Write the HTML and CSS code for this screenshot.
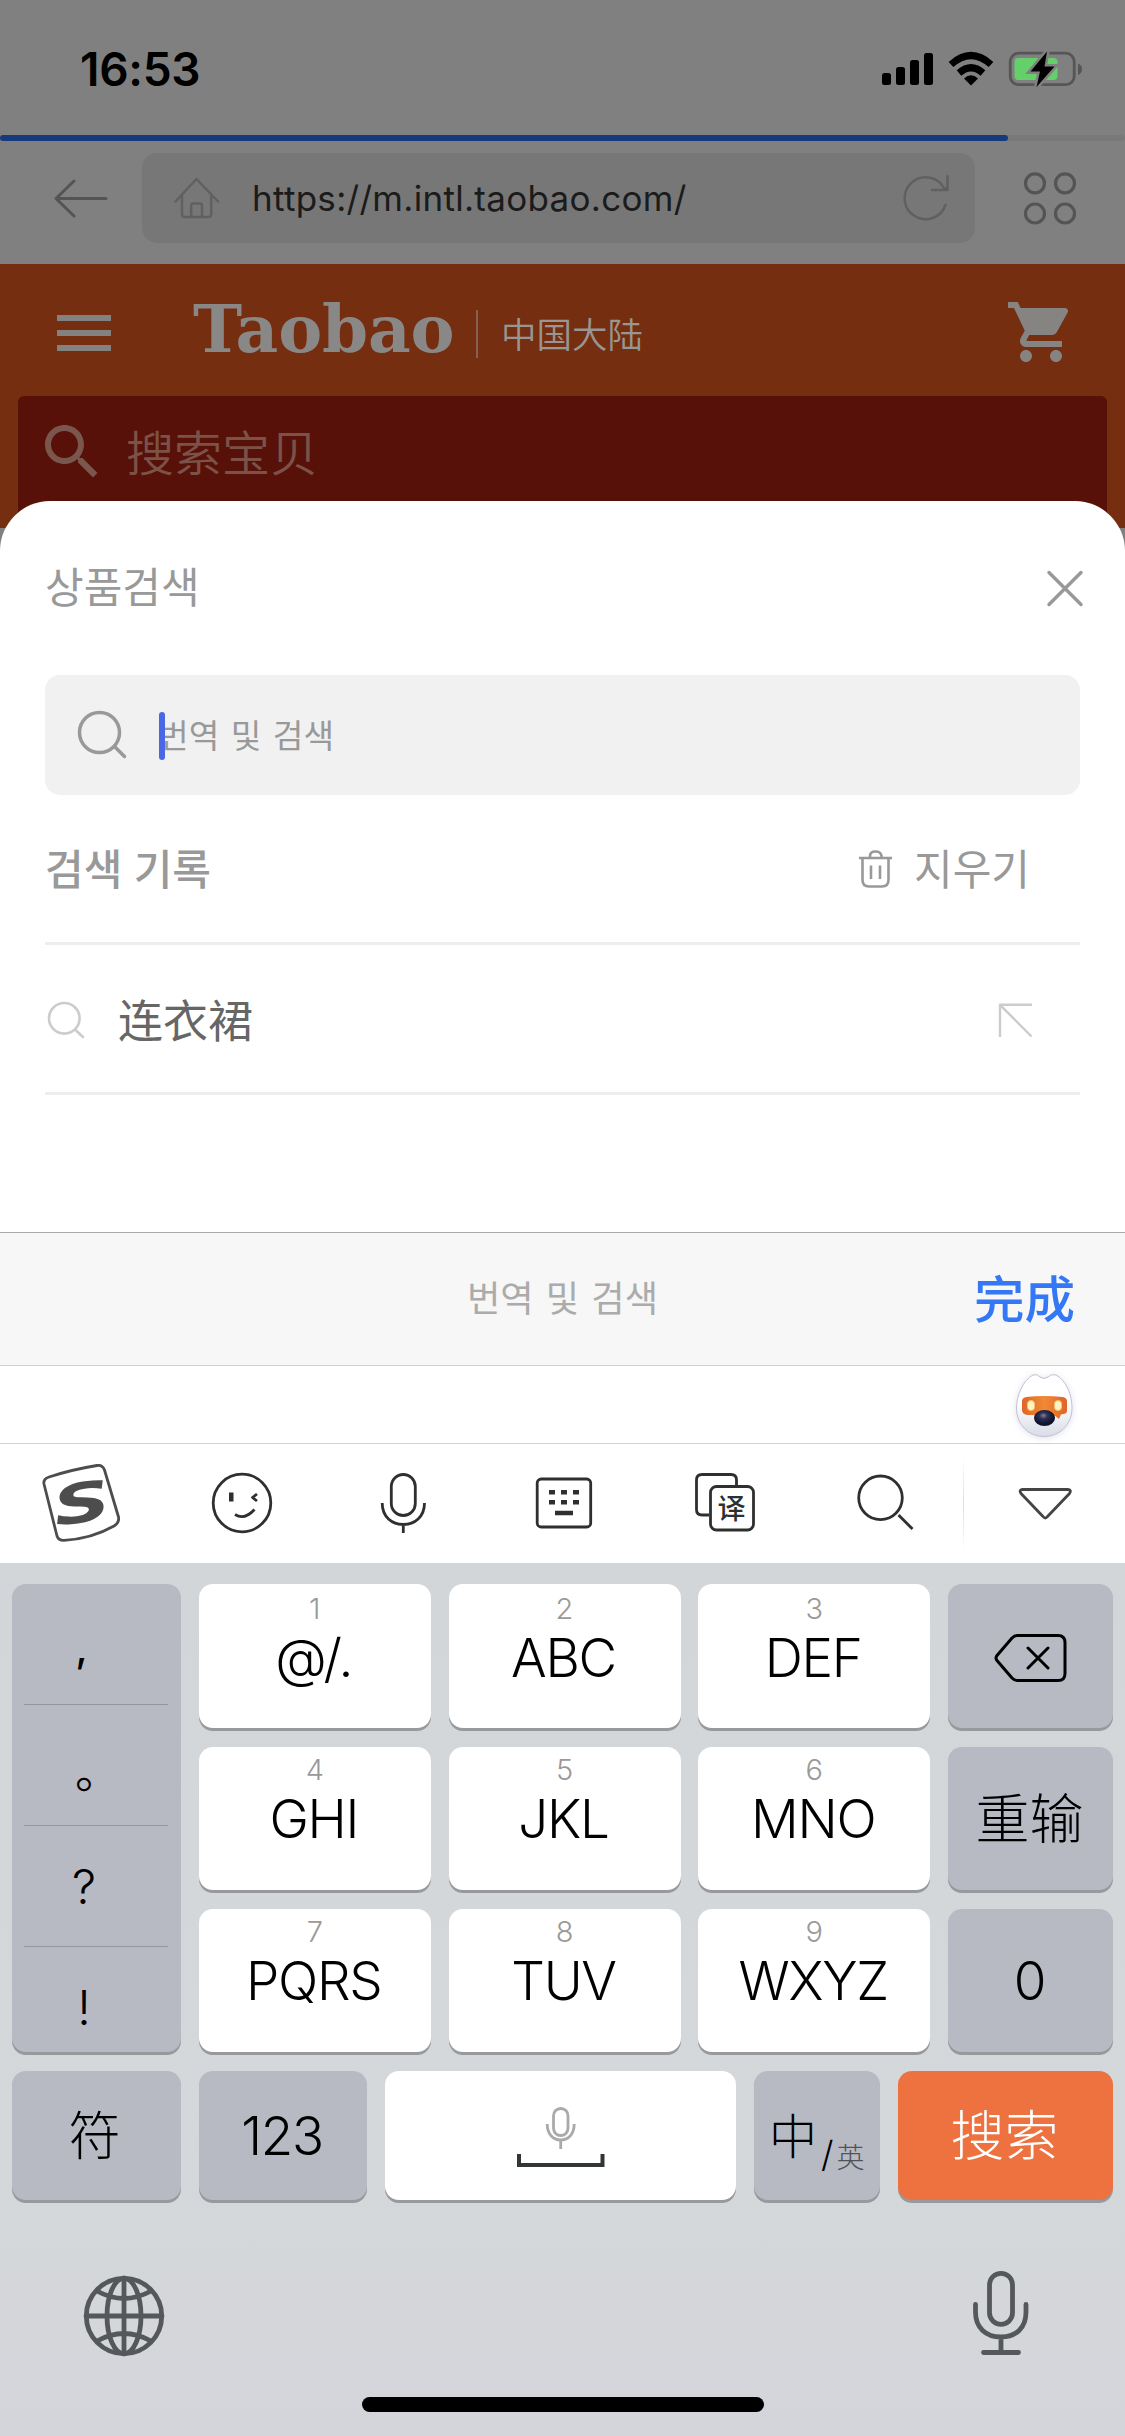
FILE: index.html
```html
<!DOCTYPE html>
<html lang="zh-CN">
<head>
<meta charset="utf-8">
<title>상품검색</title>
<link rel="stylesheet" href="styles.css">
</head>
<body>
<div class="screen">
  <div class="browser">
    <div class="status">
      <span class="time">16:53</span>
      <svg class="status-icons" viewBox="882 46 204 46" width="204" height="46">
        <rect x="882" y="73" width="9" height="12" rx="2.5"/><rect x="896" y="67" width="9" height="18" rx="2.5"/><rect x="910" y="60" width="9" height="25" rx="2.5"/><rect x="924" y="53" width="9" height="32" rx="2.5"/>
        <path d="M951 64.500Q971 46.500 991 64.500M959 73Q971 62.500 983 73" fill="none" stroke="#000" stroke-width="7"/>
        <path d="M964 78.500Q971 72 978 78.500L971 85.500Z"/>
        <rect x="1010.200" y="53.200" width="64" height="31.500" rx="8.500" fill="none" stroke="#565656" stroke-width="2.800"/>
        <path d="M1078 63.500Q1082 65 1082 69.200T1078 75Z" fill="#565656"/>
        <rect x="1014.500" y="58" width="43" height="22" rx="4" fill="#65cf6a"/>
        <path d="M1047 51.500L1030.500 71.500H1040L1036.500 87L1054.500 66.500H1044.500Z" stroke="#808080" stroke-width="5"/>
        <path d="M1047 51.500L1030.500 71.500H1040L1036.500 87L1054.500 66.500H1044.500Z"/>
      </svg>
    </div>
    <div class="progress"><div class="progress-done"></div></div>
    <div class="toolbar">
      <svg class="back" viewBox="52 176 58 44" width="58" height="44"><path d="M74 181L56 198.500L74 216M56 198.500H106"/></svg>
      <div class="address">
        <svg class="home" viewBox="172 174 50 50" width="50" height="50"><path d="M175.500 202.500L196.500 180L218 202.500M182 197V215.500Q182 218 184.500 218H208.500Q211.200 218 211.200 215.500V197M191.200 218V206.500Q191.200 204.500 193.200 204.500H200Q202 204.500 202 206.500V218"/></svg>
        <span class="url">https://m.intl.taobao.com/</span>
        <svg class="reload" viewBox="900 174 50 50" width="50" height="50"><path d="M945.500 206A21 21 0 1 1 944 189L947 190.500M947.500 177V191H932"/></svg>
      </div>
      <svg class="apps" viewBox="1022 170 56 56" width="56" height="56"><circle cx="1035" cy="183.300" r="9.500"/><circle cx="1065" cy="183.300" r="9.500"/><circle cx="1035" cy="213.500" r="9.500"/><circle cx="1065" cy="213.500" r="9.500"/></svg>
    </div>
    <div class="shop">
      <div class="shop-head">
        <div class="burger"><i></i><i></i><i></i></div>
        <span class="brand">Taobao</span>
        <span class="region">中国大陆</span>
        <svg class="cart" viewBox="0 0 24 24" width="72" height="72"><path d="M7 18c-1.100 0-1.990.9-1.990 2S5.900 22 7 22s2-.9 2-2-.9-2-2-2zM1 2v2h2l3.600 7.590-1.350 2.450c-.16.28-.25.61-.25.96 0 1.100.9 2 2 2h12v-2H7.420c-.14 0-.25-.11-.25-.25l.03-.12.9-1.630h7.450c.75 0 1.410-.41 1.750-1.030l3.580-6.490c.08-.14.12-.31.12-.48 0-.55-.45-1-1-1H5.210l-.94-2H1zm16 16c-1.100 0-1.990.9-1.990 2s.89 2 1.990 2 2-.9 2-2-.9-2-2-2z"/></svg>
      </div>
      <div class="shop-search">
        <svg viewBox="0 0 24 24" width="72" height="72"><path d="M15.500 14h-.79l-.28-.27C15.410 12.590 16 11.110 16 9.500 16 5.910 13.090 3 9.500 3S3 5.910 3 9.500 5.910 16 9.500 16c1.610 0 3.090-.59 4.230-1.570l.27.28v.79l5 4.990L20.490 19l-4.990-5zm-6 0C7.010 14 5 11.990 5 9.500S7.010 5 9.500 5 14 7.010 14 9.500 11.990 14 9.500 14z"/></svg>
        <span>搜索宝贝</span>
      </div>
    </div>
  </div>

  <div class="sheet">
    <div class="sheet-head">
      <span class="ko title">상품검색</span>
      <svg viewBox="1045 568 40 40" width="40" height="40"><path d="M1049 572.500L1081 604.500M1081 572.500L1049 604.500"/></svg>
    </div>
    <div class="field">
      <svg viewBox="76 710 54 54" width="54" height="54"><circle cx="99.500" cy="733.500" r="20"/><path d="M115 748L124.500 757.500"/></svg>
      <div class="field-text"><i class="caret"></i><span class="ko">번역 및 검색</span></div>
    </div>
    <div class="row">
      <span class="ko heading">검색 기록</span>
      <svg class="trash" viewBox="857 848 38 44" width="38" height="44"><path d="M859 859H892M862.500 859V881Q862.500 887.500 869 887.500H882Q888.500 887.500 888.500 881V859M870 859V857Q870 852.500 875.500 852.500T881.500 857V859M871 866.500V880M880 866.500V880"/></svg>
      <span class="ko clear">지우기</span>
    </div>
    <div class="row">
      <svg class="mini" viewBox="46 1000 42 42" width="42" height="42"><circle cx="64.300" cy="1019.300" r="15.300"/><path d="M76 1031.500L83 1038"/></svg>
      <span class="term">连衣裙</span>
      <svg class="fill" viewBox="997 1002 38 38" width="38" height="38"><path d="M1032 1005.800H1000V1038M1000 1005.800L1031.500 1037.500"/></svg>
    </div>
  </div>

  <div class="accessory"><span></span><span class="ko hint">번역 및 검색</span><span class="done">完成</span></div>
  <div class="mascot-strip">
    <svg viewBox="1010 1368 68 74" width="68" height="74">
      <defs>
        <linearGradient id="body" x1="0" y1="0" x2="0" y2="1"><stop offset=".45" stop-color="#fff"/><stop offset="1" stop-color="#d9dce6"/></linearGradient>
        <linearGradient id="visor" x1="0" x2="1" y1="0" y2="0"><stop offset="0" stop-color="#e0642a"/><stop offset=".5" stop-color="#f08a35"/><stop offset="1" stop-color="#e0642a"/></linearGradient>
        <radialGradient id="nose" cx=".45" cy=".35"><stop offset="0" stop-color="#80809c"/><stop offset=".4" stop-color="#2c3152"/><stop offset="1" stop-color="#10142b"/></radialGradient>
      </defs>
      <path d="M1033 1375Q1037 1373.500 1040 1377Q1044 1380 1048 1377Q1051 1373.500 1056 1375C1067 1381 1072 1396 1072 1408C1072 1425 1059 1436.500 1044 1436.500S1016.500 1425 1016.500 1408C1016.500 1396 1023 1380 1033 1375Z" fill="url(#body)" stroke="#c3c0d0"/>
      <path d="M1026 1397Q1044 1395 1063 1397Q1067 1398 1067 1401V1411Q1067 1414 1061 1414.500L1059 1419L1054 1415H1027Q1022 1414 1022 1410V1401Q1022 1398 1026 1397Z" fill="url(#visor)"/>
      <rect x="1027.500" y="1400.500" width="7" height="10" rx="3.500" fill="#fff4c4" stroke="#ffc06a"/><rect x="1054.500" y="1400.500" width="7" height="10" rx="3.500" fill="#fff4c4" stroke="#ffc06a"/>
      <ellipse cx="1044.500" cy="1418" rx="10.500" ry="8" fill="url(#nose)"/>
    </svg>
  </div>

  <div class="ime-bar">
    <svg viewBox="41 1444 80 119"><path d="M49 1477Q43 1479 44 1484L57 1536Q58.500 1540.500 64 1540.300Q91 1539 114 1526Q119.500 1522.500 118.500 1517L104.500 1470Q102.500 1464.500 97 1465.500Q72 1469.500 49 1477Z" stroke="#4d4d4d"/><text class="s-mark" transform="translate(81.500 1502) rotate(-9) scale(1.480 1)" text-anchor="middle" y="20">S</text></svg>
    <svg viewBox="202 1444 80 119"><circle cx="242" cy="1503" r="28.800"/><path d="M235 1514.500Q244.500 1520.500 254.500 1509.500" /><path d="M257 1494L252.500 1497.500L257 1501"/><rect x="229" y="1492.500" width="4.500" height="9" fill="#2e2f2f" stroke="none"/></svg>
    <svg viewBox="363 1444 80 119"><rect x="391.300" y="1474.500" width="24" height="41" rx="12"/><path d="M382.200 1503C382.200 1517 392 1524.500 403.300 1524.500S424.500 1517 424.500 1503M403.300 1524.500V1533"/></svg>
    <svg viewBox="524 1444 80 119"><rect x="537.200" y="1479" width="53.500" height="48" rx="4"/><path d="M549 1492.200H555M561 1492.200H567M573 1492.200H579M549 1502.200H555M561 1502.200H567M573 1502.200H579M555 1513H573" stroke-width="4.400"/></svg>
    <svg viewBox="685 1444 80 119"><path d="M709 1515H702Q696.500 1515 696.500 1509.500V1480Q696.500 1474.500 702 1474.500H731Q736.500 1474.500 736.500 1480V1486"/><rect x="710.500" y="1486.500" width="43" height="43.500" rx="6"/><text class="yi" x="731.500" y="1518.500" text-anchor="middle">译</text></svg>
    <svg viewBox="844 1444 80 119"><circle cx="880.500" cy="1497.800" r="21.800"/><path d="M898.500 1515L912.500 1529"/></svg>
    <svg class="collapse" viewBox="1004 1444 80 119"><path d="M1022.500 1489.500H1068Q1072 1490 1069.500 1493.500L1047.500 1516.500Q1045.300 1519.500 1043 1516.500L1021 1493.500Q1018.500 1490 1022.500 1489.500Z"/></svg>
  </div>

  <div class="keyboard">
    <div class="keys">
      <div class="key gray punct"><span class="comma">,</span><span class="maru">。</span><span>?</span><span>!</span></div>
      <div class="key k1"><small>1</small><b>@/.</b></div>
      <div class="key k1"><small>2</small><b>ABC</b></div>
      <div class="key k1"><small>3</small><b>DEF</b></div>
      <div class="key gray"><svg viewBox="993 1631 77 54" width="77" height="54"><path d="M1018 1635.500H1059Q1066 1635.500 1066 1642.500V1673.500Q1066 1680.500 1059 1680.500H1018Q1015.500 1680.500 1013 1678L998 1660.500Q996 1658 998 1655.500L1013 1638Q1015.500 1635.500 1018 1635.500ZM1029 1648L1049 1668M1049 1648L1029 1668"/></svg></div>
      <div class="key"><small>4</small><b>GHI</b></div>
      <div class="key"><small>5</small><b>JKL</b></div>
      <div class="key"><small>6</small><b>MNO</b></div>
      <div class="key gray"><span class="cn">重输</span></div>
      <div class="key"><small>7</small><b>PQRS</b></div>
      <div class="key"><small>8</small><b>TUV</b></div>
      <div class="key"><small>9</small><b>WXYZ</b></div>
      <div class="key gray zero"><b>0</b></div>
    </div>
    <div class="keys-bottom">
      <div class="key gray"><span class="cn fu">符</span></div>
      <div class="key gray"><b class="num">123</b></div>
      <div class="key space"><svg viewBox="510 2100 102 72" width="102" height="72"><g stroke="#aaa" stroke-width="2.800"><rect x="553.500" y="2108.500" width="14.500" height="27" rx="7.200"/><path d="M547.200 2124C547.200 2134 553 2140 560.700 2140S574.200 2134 574.200 2124M560.700 2140V2149"/></g><path d="M519 2154V2165H602.500V2154" stroke="#333636" stroke-width="4"/></svg></div>
      <div class="key gray lang"><span class="zh">中</span><span class="slash">/</span><span class="en">英</span></div>
      <div class="key go"><span class="cn">搜索</span></div>
    </div>
    <div class="system">
      <svg viewBox="80 2266 88 100" width="88" height="100"><circle cx="124" cy="2316" r="37.700"/><ellipse cx="124" cy="2316" rx="17" ry="37.700"/><path d="M124 2278V2354M86 2316H162M97 2291Q124 2306 151 2291M97 2341Q124 2326 151 2341"/></svg>
      <svg viewBox="966 2266 70 100" width="70" height="100"><rect x="989.500" y="2273.300" width="23" height="51" rx="11.500"/><path d="M975.500 2304.500V2312C975.500 2328 986 2337 1001 2337S1026 2328 1026 2312V2304.500M1001 2337V2352M983.500 2352.500H1018.500"/></svg>
    </div>
    <div class="home-indicator"></div>
  </div>
</div>
</body>
</html>
```
FILE: styles.css
```css
* { box-sizing: border-box; }
body { margin: 0; font-family: Inter, "Noto Sans CJK SC", sans-serif; background: #d4d6da; }
svg { display: block; flex: none; }
.screen { width: 1125px; height: 2436px; overflow: hidden; display: flex; flex-direction: column; }
.screen > * { flex: none; }
.ko { font-family: "Noto Sans CJK KR", sans-serif; white-space: nowrap; }

/* dimmed browser behind the sheet */
.browser { height: 570px; background: #808080; }
.status { height: 135px; display: flex; justify-content: space-between; padding: 46px 39px 0 80px; }
.time { font-size: 46px; line-height: 47px; font-weight: 600; letter-spacing: -.3px; color: #000; }
.progress { height: 6px; background: #797979; border-radius: 3px; }
.progress-done { width: 1008px; height: 6px; border-radius: 3px; background: #173a7c; }
.toolbar { height: 123px; display: flex; align-items: center; padding: 0 47px 9px 52px; }
.toolbar svg { fill: none; stroke: #545454; stroke-width: 3; stroke-linecap: round; stroke-linejoin: round; }
.toolbar .address svg { stroke: #606060; stroke-width: 2.500; }
.address { width: 833px; height: 90px; margin: 0 47px 0 32px; padding: 0 25px 0 30px; border-radius: 15px; background: #777; display: flex; align-items: center; }
.url { flex: 1; margin-left: 30px; font-size: 35px; line-height: 44px; letter-spacing: .3px; color: #1b1b1b; white-space: nowrap; }
.toolbar .apps { stroke-width: 3.200; }
.shop { height: 264px; background: #752e10; padding: 0 18px; }
.shop-head { height: 132px; display: flex; align-items: center; padding: 7px 30px 0 39px; color: #8a8886; }
.burger { width: 54px; display: flex; flex-direction: column; gap: 9px; margin-top: -1px; }
.burger i { height: 6px; background: #848280; }
.brand { width: 286px; height: 48px; margin-left: 81px; padding-left: 1px; border-right: 2px solid #86604f; font: bold 66px/38px "DejaVu Serif", serif; letter-spacing: -.200px; }
.region { flex: 1; margin-left: 23px; padding-top: 4px; font-size: 35.500px; line-height: 50px; font-weight: 350; color: #999591; }
.cart { fill: #868482; margin-bottom: 3px; }
.shop-search { height: 132px; border-radius: 6px 6px 0 0; background: #571108; display: flex; align-items: flex-start; padding: 20px 18px; color: #7c5248; }
.shop-search svg { fill: #7b564d; }
.shop-search span { margin: 2px 0 0 18px; font-size: 48px; line-height: 72px; font-weight: 350; }

/* search sheet */
.sheet { position: relative; height: 731px; margin-top: -69px; padding: 0 45px; border-radius: 50px 50px 0 0; background: #fff; color: #999; }
.sheet svg { fill: none; stroke: #999; stroke-width: 3.500; stroke-linecap: round; stroke-linejoin: round; }
.sheet-head { height: 174px; display: flex; justify-content: space-between; align-items: center; margin-right: -5px; }
.title { font-size: 42px; line-height: 60px; margin-top: -6px; }
.field { height: 120px; border-radius: 15px; background: #f1f1f1; display: flex; align-items: center; padding: 2px 31px 0; }
.field-text { margin-left: 29px; display: flex; align-items: center; font-size: 33.300px; word-spacing: 4px; line-height: 48px; }
.field-text .ko { margin-top: -4px; }
.caret { width: 6px; height: 48px; margin-right: -7px; border-radius: 3px; background: #4a68e6; position: relative; z-index: 1; }
.row { height: 150px; border-bottom: 3px solid #eee; display: flex; align-items: center; }
.heading { flex: 1; font-size: 42px; font-weight: 500; word-spacing: 2px; margin-top: -4px; }
.sheet .trash { stroke-width: 2.600; stroke-linecap: butt; }
.clear { font-size: 42px; margin: -4px 0 0 19px; width: 166px; }
.sheet .mini { margin: 3px 0 0 1px; stroke: #ccc; stroke-width: 2.600; }
.term { flex: 1; margin-left: 30px; font-size: 45px; color: #666; }
.sheet .fill { margin: 3px 45px 0 0; stroke: #ccc; stroke-width: 2.400; stroke-linecap: butt; }

/* keyboard accessory */
.accessory { height: 134px; border-top: 1px solid #a9a9a9; border-bottom: 1px solid #d3d3d3; background: #f7f7f7; display: grid; grid-template-columns: 1fr auto 1fr; align-items: center; padding: 0 50px 6px; }
.hint { font-size: 36.300px; word-spacing: 4px; color: #ababab; }
.done { justify-self: end; font-size: 50.500px; font-weight: 500; color: #3478f6; }
.mascot-strip { height: 78px; background: #fff; border-bottom: 1px solid #d3d3d3; display: flex; justify-content: flex-end; padding: 2px 47px 0; }
.mascot-strip svg { filter: drop-shadow(0 1px 3px rgba(120, 130, 190, .25)); }
.ime-bar { height: 119px; background: #fff; display: grid; grid-template-columns: 161px 161px 161px 161px 161px 158px 162px; justify-items: center; }
.ime-bar svg { width: 80px; height: 119px; fill: none; stroke: #2e2f2f; stroke-width: 2.800; stroke-linejoin: round; }
.ime-bar svg.collapse { stroke: #444; }
.ime-bar text { stroke: none; fill: #2e2f2f; }
.ime-bar .s-mark { font: italic bold 54px "DejaVu Sans", sans-serif; fill: #4d4d4d; }
.ime-bar .yi { font: 500 28px "Noto Sans CJK SC", sans-serif; }
.ime-bar svg:last-child { width: 162px; background: linear-gradient(#fff, #ddd, #fff) left center / 1px 96px no-repeat; }

/* keys */
.keyboard { flex: 1; background: linear-gradient(#d2d6d9, #d4d8da 70%, #d4d5da); padding-top: 21px; }
.keys { display: grid; grid-template-columns: 169px 232px 232px 232px 165px; grid-template-rows: 144px 143px 143px; justify-content: space-between; row-gap: 19px; padding: 0 12px; }
.keys-bottom { display: grid; grid-template-columns: 169px 168px 351px 126px 215px; grid-template-rows: 129px; column-gap: 18px; padding: 0 12px; margin-top: 19px; }
.key { border-radius: 14px; background: #fff; box-shadow: 0 3px 0 #97999c; display: flex; flex-direction: column; align-items: center; color: #000; }
.key b { font-size: 53px; line-height: 64px; font-weight: 300; letter-spacing: -1.300px; margin-right: 2px; }
.key small { font-size: 29px; line-height: 36px; font-weight: 300; color: #999; margin: 5px 0 -1px; }
.key.k1 small { margin-top: 7px; }
.gray, .go { background: #b7bac3; justify-content: center; }
.punct { grid-row: span 3; padding: 0 13px 0 12px; align-items: stretch; justify-content: flex-start; }
.punct span { height: 121px; flex: none; border-bottom: 1px solid #94979f; display: flex; justify-content: center; padding: 33px 24px 0 0; font-size: 48px; line-height: 56px; font-weight: 300; }
.punct span:last-child { height: 104px; border: 0; }
.punct .comma { padding-right: 29px; font-weight: 500; font-size: 40px; padding-top: 36px; }
.punct .maru { padding: 38px 0 0 4px; font-weight: 350; font-size: 46px; }
.key svg { fill: none; stroke: #000; stroke-width: 3; stroke-linecap: round; stroke-linejoin: round; margin-top: 3px; }
.keys-bottom .space svg { margin-top: 29px; stroke-linecap: butt; stroke-linejoin: miter; }
.cn { font-size: 54px; line-height: 64px; font-weight: 300; padding-top: 2px; margin-right: 2px; }
.fu { margin-right: 4px; font-size: 52px; }
.lang { flex-direction: row; align-items: flex-start; justify-content: flex-start; padding: 35px 0 0 15px; font-weight: 300; }
.zh { font-size: 48px; line-height: 62px; }
.slash { font-size: 36px; line-height: 40px; margin: 28px 0 0 4px; }
.en { font-size: 28px; line-height: 40px; color: #50545a; margin: 32px 0 0 3px; }
.go { background: #ee7140; color: #fff; }
.system { display: flex; justify-content: space-between; padding: 66px 89px 0 80px; }
.system svg { fill: none; stroke: #55585b; stroke-width: 4.800; stroke-linecap: round; }
.home-indicator { width: 402px; height: 15px; margin: 31px auto 0; border-radius: 8px; background: #000; }
```
